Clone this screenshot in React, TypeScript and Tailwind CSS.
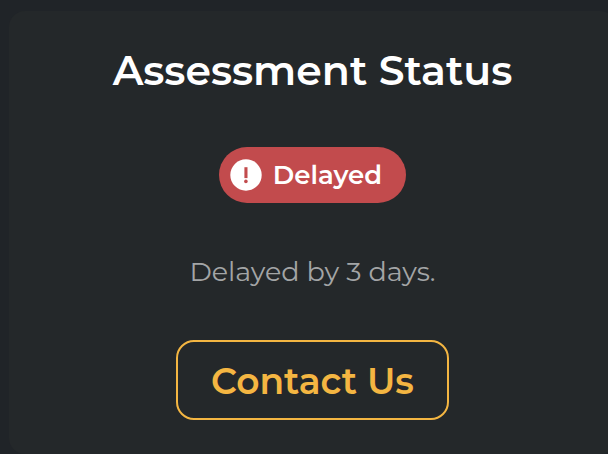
function StatusBadge({ label }: { label: string }) {
  return (
    <div className="flex h-14 items-center gap-[11px] rounded-full bg-[#c24b4d] pl-[11px] pr-6">
      <svg viewBox="0 0 32 32" className="size-8" aria-hidden="true">
        <circle cx="16" cy="16" r="15.7" fill="#fff" />
        <path d="M14.4 8.2h3.1v10.9h-3.1z" fill="#c24b4d" />
        <circle cx="15.9" cy="22.4" r="1.8" fill="#c24b4d" />
      </svg>
      <span className="text-[26px] font-semibold text-white">{label}</span>
    </div>
  );
}

export default function App() {
  return (
    <div className="min-h-screen overflow-hidden bg-[#202428] pl-[9px] pt-[11px] font-['Montserrat','Open_Sans',sans-serif]">
      {/* the card bleeds past the right edge */}
      <main className="-mr-2 flex min-h-[calc(100vh-11px)] flex-col items-center rounded-2xl bg-[#24282a] pt-[31px] pb-8">
        <h1 className="text-[41px] leading-14 font-semibold text-white">
          Assessment Status
        </h1>
        <div className="mt-[49px]">
          <StatusBadge label="Delayed" />
        </div>
        <p className="mt-[49px] text-[27px] leading-10 text-[#a3a5a6]">
          Delayed by 3 days.
        </p>
        <button
          type="button"
          className="mt-12 h-20 rounded-[18px] border-2 border-[#f4b642] px-[33px] pt-[2px] text-4xl font-semibold text-[#f4b642]"
        >
          Contact Us
        </button>
      </main>
    </div>
  );
}
